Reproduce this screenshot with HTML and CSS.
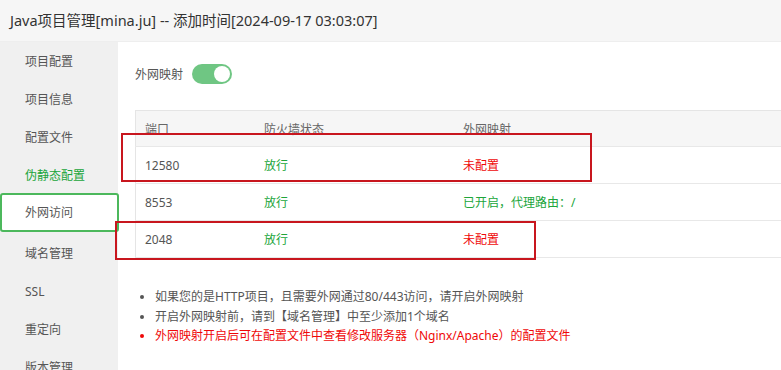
FILE: index.html
```html
<!DOCTYPE html>
<html lang="zh-CN">
<head>
    <meta charset="UTF-8">
    <title>Java项目管理</title>
    <link rel="stylesheet" href="styles.css">
</head>
<body>
    <div class="title">Java项目管理[mina.ju] -- 添加时间[2024-09-17 03:03:07]</div>

    <div class="layout">
        <ul class="menu">
            <li>项目配置</li>
            <li>项目信息</li>
            <li>配置文件</li>
            <li class="green">伪静态配置</li>
            <li class="active">外网访问</li>
            <li>域名管理</li>
            <li>SSL</li>
            <li>重定向</li>
            <li>版本管理</li>
        </ul>

        <div class="content">
            <div class="switch-row">
                <span>外网映射</span>
                <span class="switch"><span class="knob"></span></span>
            </div>

            <table class="ports">
                <thead>
                    <tr>
                        <th class="col-port">端口</th>
                        <th class="col-fw">防火墙状态</th>
                        <th>外网映射</th>
                    </tr>
                </thead>
                <tbody>
                    <tr>
                        <td>12580</td>
                        <td class="ok">放行</td>
                        <td class="bad">未配置</td>
                    </tr>
                    <tr>
                        <td>8553</td>
                        <td class="ok">放行</td>
                        <td class="ok">已开启，代理路由：/</td>
                    </tr>
                    <tr>
                        <td>2048</td>
                        <td class="ok">放行</td>
                        <td class="bad">未配置</td>
                    </tr>
                </tbody>
            </table>

            <ul class="tips">
                <li>如果您的是HTTP项目，且需要外网通过80/443访问，请开启外网映射</li>
                <li>开启外网映射前，请到【域名管理】中至少添加1个域名</li>
                <li class="warn">外网映射开启后可在配置文件中查看修改服务器（Nginx/Apache）的配置文件</li>
            </ul>
        </div>

        <!-- annotation boxes -->
        <div class="mark mark-1"></div>
        <div class="mark mark-2"></div>
    </div>
</body>
</html>
```

FILE: styles.css
```css
body {
    margin: 0;
    font-family: "Noto Sans", "Noto Sans CJK SC", sans-serif;
    font-size: 12px;
    color: #555;
    background: #fff;
    overflow: hidden;
}

.title {
    height: 41px;
    line-height: 40px;
    padding-left: 10px;
    font-size: 14.5px;
    color: #333;
    background: #f6f6f6;
    border-bottom: 1px solid #eee;
    white-space: nowrap;
}

.layout {
    display: flex;
    position: relative;
    height: 328px;
}

.menu {
    list-style: none;
    margin: 0;
    padding: 1px 0 0 0;
    width: 118px;
    flex-shrink: 0;
    background: #f0f0f0;
}

.menu li {
    height: 38px;
    line-height: 38px;
    padding-left: 25px;
    font-size: 12px;
    color: #555;
}

.menu li.green {
    color: #20a53a;
}

.menu li.active {
    background: #fff;
    margin-right: -1px;
    height: 35px;
    line-height: 35px;
    margin-top: -2px;
    margin-bottom: 3px;
    padding-left: 23px;
    border: 2px solid #4cb85c;
    border-radius: 3px;
}

.content {
    flex: 1;
    padding: 0 0 0 17px;
    min-width: 0;
}

.switch-row {
    display: flex;
    align-items: center;
    height: 22px;
    margin-top: 21px;
    gap: 9px;
}

.switch {
    display: flex;
    align-items: center;
    justify-content: flex-end;
    width: 40px;
    height: 20px;
    padding: 0 2px;
    box-sizing: border-box;
    border-radius: 10px;
    background: #6fc683;
}

.knob {
    width: 16px;
    height: 16px;
    border-radius: 50%;
    background: #fff;
}

.ports {
    margin-top: 25px;
    width: 660px;
    border-collapse: collapse;
    border-left: 1px solid #e5e5e5;
    border-top: 1px solid #e5e5e5;
}

.ports th,
.ports td {
    height: 36px;
    padding: 0 0 0 9px;
    text-align: left;
    border-bottom: 1px solid #e8e8e8;
    font-weight: normal;
    white-space: nowrap;
}

.ports th {
    background: #f6f6f6;
    color: #666;
    height: 35px;
}

.ports .col-port {
    width: 110px;
}

.ports .col-fw {
    width: 190px;
}

.ports .ok {
    color: #20a53a;
}

.ports .bad {
    color: #ef0808;
}

.tips {
    margin: 29px 0 0 0;
    padding-left: 20px;
    color: #555;
}

.tips li {
    line-height: 19.5px;
}

.tips li::marker {
    color: #555;
}

.tips li.warn {
    color: #ef0808;
}

.tips li.warn::marker {
    color: #ef0808;
}

.mark {
    position: absolute;
    border: 2px solid #c8161e;
}

.mark-1 {
    left: 121px;
    top: 91px;
    width: 467px;
    height: 45px;
}

.mark-2 {
    left: 115px;
    top: 179px;
    width: 417px;
    height: 35px;
}
```
